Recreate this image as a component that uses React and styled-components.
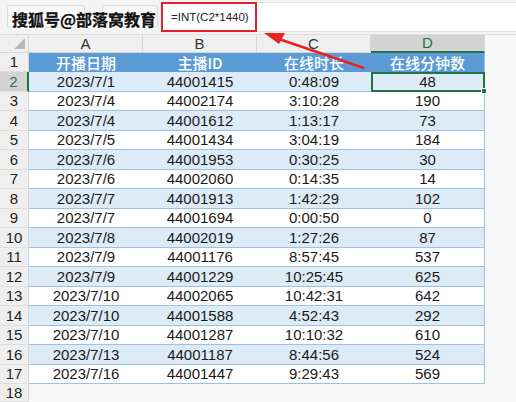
import React from "react"
import styled, { createGlobalStyle } from "styled-components"

const GlobalStyle = createGlobalStyle`
  html, body {
    margin: 0;
    padding: 0;
    background: #ffffff;
  }
  body {
    font-family: "Liberation Sans", Arial, "Noto Sans CJK SC", sans-serif;
  }
`

const Sheet = styled.div`
  position: relative;
  width: 516px;
  height: 402px;
  overflow: hidden;
  background: #f7f7f7;
  display: flex;
  flex-direction: column;
`

// formula bar
const FormulaBar = styled.div`
  height: 36px;
  display: flex;
  align-items: center;
  background: #f3f3f3;
  border-bottom: 1px solid #dcdcdc;
  box-sizing: border-box;
  padding-left: 7px;
`

const NameBox = styled.div`
  width: 78px;
  height: 23px;
  border: 1px solid #dadada;
  border-radius: 3px;
  background: #f8f8f8;
  box-sizing: border-box;
`

const FxBox = styled.div`
  margin-left: 17px;
  width: 56px;
  height: 23px;
  border: 1px solid #dadada;
  border-radius: 3px;
  background: #f8f8f8;
  box-sizing: border-box;
  display: flex;
  align-items: center;
  justify-content: flex-end;
  padding-right: 2px;
  font-family: "Liberation Serif", serif;
  font-style: italic;
  font-size: 12px;
  color: #555;
`

const FormulaInput = styled.div`
  margin-left: 4px;
  flex: 1;
  height: 30px;
  background: #ffffff;
  border-top: 1px solid #e2e2e2;
  border-bottom: 1px solid #e2e2e2;
  box-sizing: border-box;
  display: flex;
  align-items: center;
`

const Highlight = styled.div`
  width: 96px;
  height: 30px;
  border: 2px solid #e5202a;
  box-sizing: border-box;
  display: flex;
  align-items: center;
  padding-left: 8px;
  font-size: 11.5px;
  color: #222;
  margin-left: -1px;
`

const Watermark = styled.div`
  position: absolute;
  left: 12px;
  top: 7px;
  font-family: "Noto Sans CJK SC", sans-serif;
  font-weight: 700;
  font-size: 16px;
  color: #111;
  -webkit-text-stroke: 0.3px #111;
  text-shadow: 1px 1px 0 #fff, -1px -1px 0 #fff, 1px -1px 0 #fff, -1px 1px 0 #fff,
    0 1.5px 0 #fff, 0 -1.5px 0 #fff, 1.5px 0 0 #fff, -1.5px 0 0 #fff;
`

// grid
const Grid = styled.div`
  display: grid;
  grid-template-columns: 29px 114px 114px 114px 114px 1fr;
  grid-template-rows: 18px repeat(17, 19.5px) 1fr;
  flex: 1;
`

const Corner = styled.div`
  background: #efefef;
  border-right: 1px solid #d6d6d6;
  border-bottom: 1px solid #d6d6d6;
  box-sizing: border-box;
  position: relative;
  &::after {
    content: "";
    position: absolute;
    right: 3px;
    bottom: 3px;
    border-left: 11px solid transparent;
    border-bottom: 11px solid #b7b7b7;
  }
`

const ColHead = styled.div`
  background: ${(p) => (p.$active ? "#d3d3d3" : "#efefef")};
  color: ${(p) => (p.$active ? "#217346" : "#333")};
  border-right: 1px solid #d6d6d6;
  border-bottom: ${(p) => (p.$active ? "2px solid #217346" : "1px solid #d6d6d6")};
  box-sizing: border-box;
  display: flex;
  align-items: center;
  justify-content: center;
  font-size: 15px;
`

const RowHead = styled.div`
  background: ${(p) => (p.$active ? "#d3d3d3" : "#efefef")};
  color: ${(p) => (p.$active ? "#217346" : "#222")};
  border-right: ${(p) => (p.$active ? "2px solid #217346" : "1px solid #d6d6d6")};
  border-bottom: 1px solid #dedede;
  box-sizing: border-box;
  display: flex;
  align-items: center;
  justify-content: center;
  font-size: 15px;
`

const HeadCell = styled.div`
  background: #5b9bd5;
  color: #ffffff;
  font-family: "Noto Sans CJK SC", sans-serif;
  font-size: 15px;
  font-weight: 500;
  display: flex;
  align-items: center;
  justify-content: center;
  border-right: ${(p) => (p.$last ? "1px solid #9bc2e6" : "none")};
  box-sizing: border-box;
`

const Cell = styled.div`
  position: relative;
  background: ${(p) => (p.$band ? "#ddebf7" : "#ffffff")};
  border-bottom: 1px solid #9bc2e6;
  border-right: ${(p) => (p.$last ? "1px solid #9bc2e6" : "none")};
  box-sizing: border-box;
  display: flex;
  align-items: center;
  justify-content: center;
  font-size: 15px;
  color: #1a1a1a;
  ${(p) =>
    p.$selected &&
    `
    outline: 2px solid #217346;
    outline-offset: -2px;
  `}
`

const FillHandle = styled.span`
  position: absolute;
  right: -3px;
  bottom: -3px;
  width: 6px;
  height: 6px;
  background: #217346;
  border: 1px solid #fff;
  box-sizing: border-box;
  z-index: 2;
`

const Blank = styled.div`
  background: #f7f7f7;
`

const Arrow = styled.svg`
  position: absolute;
  left: 0;
  top: 0;
  pointer-events: none;
`

const rows = [
  ["2023/7/1", "44001415", "0:48:09", "48"],
  ["2023/7/4", "44002174", "3:10:28", "190"],
  ["2023/7/4", "44001612", "1:13:17", "73"],
  ["2023/7/5", "44001434", "3:04:19", "184"],
  ["2023/7/6", "44001953", "0:30:25", "30"],
  ["2023/7/6", "44002060", "0:14:35", "14"],
  ["2023/7/7", "44001913", "1:42:29", "102"],
  ["2023/7/7", "44001694", "0:00:50", "0"],
  ["2023/7/8", "44002019", "1:27:26", "87"],
  ["2023/7/9", "44001176", "8:57:45", "537"],
  ["2023/7/9", "44001229", "10:25:45", "625"],
  ["2023/7/10", "44002065", "10:42:31", "642"],
  ["2023/7/10", "44001588", "4:52:43", "292"],
  ["2023/7/10", "44001287", "10:10:32", "610"],
  ["2023/7/13", "44001187", "8:44:56", "524"],
  ["2023/7/16", "44001447", "9:29:43", "569"],
]

const headers = ["开播日期", "主播ID", "在线时长", "在线分钟数"]

export default function App() {
  return (
    <>
      <GlobalStyle />
      <Sheet>
        <FormulaBar>
          <NameBox />
          <FxBox>fx</FxBox>
          <FormulaInput>
            <Highlight>=INT(C2*1440)</Highlight>
          </FormulaInput>
        </FormulaBar>
        <Grid>
          <Corner />
          {["A", "B", "C", "D"].map((c) => (
            <ColHead key={c} $active={c === "D"}>{c}</ColHead>
          ))}
          <Blank />

          <RowHead>1</RowHead>
          {headers.map((h, i) => (
            <HeadCell key={h} $last={i === 3}>{h}</HeadCell>
          ))}
          <Blank />

          {rows.map((r, i) => (
            <React.Fragment key={i}>
              <RowHead $active={i === 0}>{i + 2}</RowHead>
              {r.map((v, j) => (
                <Cell key={j} $band={i % 2 === 0} $last={j === 3} $selected={i === 0 && j === 3}>
                  {v}
                  {i === 0 && j === 3 && <FillHandle />}
                </Cell>
              ))}
              <Blank />
            </React.Fragment>
          ))}

          <RowHead>18</RowHead>
        </Grid>
        <Watermark>搜狐号@部落窝教育</Watermark>
        <Arrow width="516" height="402">
          <line x1="364" y1="68" x2="276" y2="38" stroke="#e8231f" strokeWidth="2.5" />
          <polygon points="264,33 285,33 279,44" fill="#e8231f" />
        </Arrow>
      </Sheet>
    </>
  )
}
